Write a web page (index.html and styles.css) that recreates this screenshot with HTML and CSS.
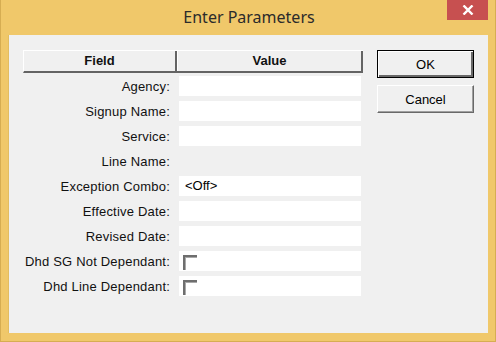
FILE: index.html
```html
<!DOCTYPE html>
<html lang="en">

<head>
    <meta charset="UTF-8">
    <title>Enter Parameters</title>
    <link rel="stylesheet" href="styles.css">
</head>

<body>

    <div class="window">

        <div class="titlebar">
            <span class="title">Enter Parameters</span>
            <div class="close">
                <svg width="12" height="10" viewBox="0 0 12 10">
                    <path d="M1.5 0.5 L10.5 9.5 M10.5 0.5 L1.5 9.5" stroke="#fff" stroke-width="2.4" />
                </svg>
            </div>
        </div>

        <div class="client">

            <div class="grid">
                <div class="head">
                    <div class="hcell field">Field</div>
                    <div class="hcell value">Value</div>
                </div>

                <div class="row">
                    <div class="label">Agency:</div>
                    <div class="box"></div>
                </div>
                <div class="row">
                    <div class="label">Signup Name:</div>
                    <div class="box"></div>
                </div>
                <div class="row">
                    <div class="label">Service:</div>
                    <div class="box"></div>
                </div>
                <div class="row">
                    <div class="label">Line Name:</div>
                    <div class="box empty"></div>
                </div>
                <div class="row">
                    <div class="label">Exception Combo:</div>
                    <div class="box">&lt;Off&gt;</div>
                </div>
                <div class="row">
                    <div class="label">Effective Date:</div>
                    <div class="box"></div>
                </div>
                <div class="row">
                    <div class="label">Revised Date:</div>
                    <div class="box"></div>
                </div>
                <div class="row">
                    <div class="label">Dhd SG Not Dependant:</div>
                    <div class="box"><span class="check"></span></div>
                </div>
                <div class="row">
                    <div class="label">Dhd Line Dependant:</div>
                    <div class="box"><span class="check"></span></div>
                </div>
            </div>

            <div class="buttons">
                <button class="btn default">OK</button>
                <button class="btn">Cancel</button>
            </div>

        </div>

    </div>

</body>

</html>
```

FILE: styles.css
```css
* {
    box-sizing: border-box;
}

html,
body {
    margin: 0;
    padding: 0;
    background-color: #ffffff;
}

.window {
    width: 496px;
    height: 342px;
    background-color: #f0c86a;
    border: 1px solid #d6ad52;
    border-top: none;
    display: flex;
    flex-direction: column;
}

.titlebar {
    height: 35px;
    display: flex;
    justify-content: center;
    position: relative;
}

.title {
    font-family: "Noto Sans", sans-serif;
    font-size: 16px;
    color: #2b2b2b;
    margin-top: 6px;
    margin-left: 2px;
}

.close {
    position: absolute;
    top: 0;
    right: 7px;
    width: 41px;
    height: 20px;
    background-color: #c75050;
    display: flex;
    align-items: center;
    justify-content: center;
}

.client {
    margin: 0 7px 8px 7px;
    flex: 1;
    background-color: #f0f0f0;
    border-left: 1px solid #e2bd62;
    display: flex;
    padding: 15px 0 0 14px;
    font-family: "Liberation Sans", Arial, sans-serif;
    font-size: 13px;
    color: #000000;
}

.grid {
    width: 340px;
}

.head {
    display: flex;
    height: 23px;
    margin-bottom: 3px;
    border-top: 1px solid #ffffff;
    border-left: 1px solid #ffffff;
    border-bottom: 2px solid #646464;
}

.hcell {
    font-weight: bold;
    text-align: center;
    line-height: 20px;
    color: #111111;
}

.field {
    width: 153px;
    border-right: 2px solid #646464;
}

.value {
    flex: 1;
    border-left: 1px solid #ffffff;
    border-right: 2px solid #646464;
}

.row {
    display: flex;
    height: 20px;
    margin-bottom: 5px;
    align-items: center;
}

.label {
    width: 156px;
    text-align: right;
    padding-right: 9px;
    color: #111111;
    letter-spacing: 0.2px;
}

.box {
    width: 182px;
    height: 20px;
    background-color: #ffffff;
    padding-left: 6px;
    line-height: 20px;
    display: flex;
    align-items: center;
}

.box.empty {
    background-color: transparent;
}

.check {
    width: 14px;
    height: 15px;
    border-top: 2px solid #6e6e6e;
    border-left: 2px solid #6e6e6e;
    background-color: #ffffff;
    box-shadow: inset 1px 1px 0 #a8a8a8;
    margin-left: -2px;
    margin-top: 2px;
}

.buttons {
    margin-left: 14px;
    display: flex;
    flex-direction: column;
    gap: 7px;
}

.btn {
    width: 97px;
    height: 28px;
    font-family: "Liberation Sans", Arial, sans-serif;
    font-size: 13px;
    color: #000000;
    background-color: #f0f0f0;
    border: 1px solid;
    border-color: #ffffff #696969 #696969 #ffffff;
    box-shadow: inset -1px -1px 0 #a0a0a0;
    padding: 0;
}

.btn.default {
    border: 1px solid #000000;
    box-shadow: inset 1px 1px 0 #ffffff, inset -2px -2px 0 #696969;
}
```
